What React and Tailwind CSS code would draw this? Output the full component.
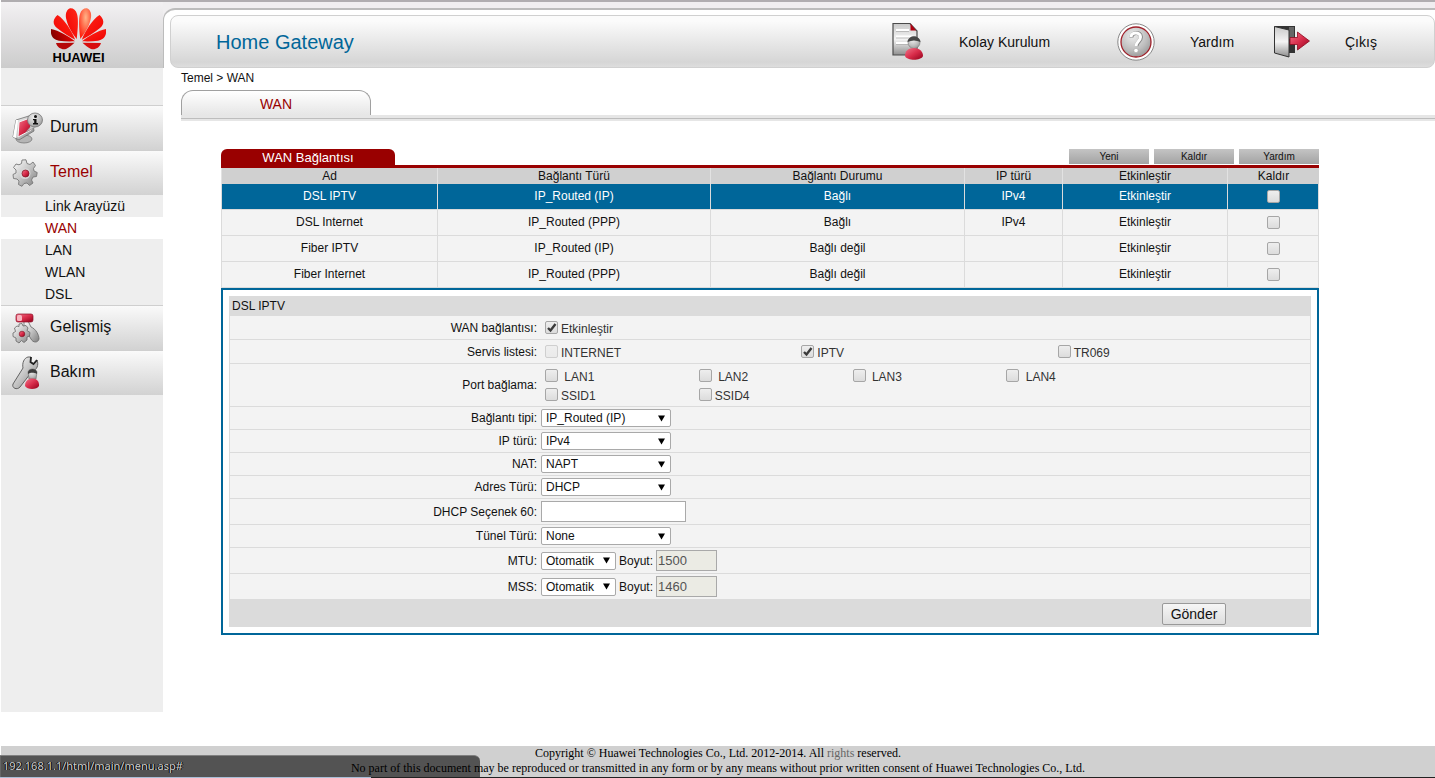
import { useState } from "react";

const connections = [
    { name: "DSL IPTV", type: "IP_Routed (IP)", status: "Bağlı", ip: "IPv4" },
    { name: "DSL Internet", type: "IP_Routed (PPP)", status: "Bağlı", ip: "IPv4" },
    { name: "Fiber IPTV", type: "IP_Routed (IP)", status: "Bağlı değil", ip: "" },
    { name: "Fiber Internet", type: "IP_Routed (PPP)", status: "Bağlı değil", ip: "" },
];

const subMenu = ["Link Arayüzü", "WAN", "LAN", "WLAN", "DSL"];

// Shared gradients, referenced by the icons below
function IconDefs() {
    return (
        <svg width="0" height="0" className="absolute" aria-hidden="true">
            <defs>
                <linearGradient id="metal" x1="0" y1="0" x2="1" y2="1">
                    <stop offset="0" stopColor="#ffffff" />
                    <stop offset="0.5" stopColor="#c4c4c4" />
                    <stop offset="1" stopColor="#7d7d7d" />
                </linearGradient>
                <linearGradient id="paper" x1="0" y1="0" x2="0" y2="1">
                    <stop offset="0" stopColor="#c9c9c9" />
                    <stop offset="0.5" stopColor="#f4f4f4" />
                    <stop offset="1" stopColor="#8e8e8e" />
                </linearGradient>
                <linearGradient id="ruby" x1="0" y1="0" x2="1" y2="1">
                    <stop offset="0" stopColor="#f0758a" />
                    <stop offset="0.5" stopColor="#d92d4b" />
                    <stop offset="1" stopColor="#93001a" />
                </linearGradient>
                <linearGradient id="petal" x1="0" y1="0" x2="1" y2="1">
                    <stop offset="0" stopColor="#ff2a1a" />
                    <stop offset="1" stopColor="#f00000" />
                </linearGradient>
                <linearGradient id="petalDark" x1="1" y1="0.6" x2="0" y2="0.4">
                    <stop offset="0" stopColor="#7c0000" />
                    <stop offset="1" stopColor="#f30000" />
                </linearGradient>
                <radialGradient id="petalLight" cx="0.55" cy="0.3" r="0.7">
                    <stop offset="0" stopColor="#ffb488" />
                    <stop offset="1" stopColor="#ff2612" />
                </radialGradient>
                <radialGradient id="dome" cx="0.4" cy="0.3" r="0.8">
                    <stop offset="0" stopColor="#ededed" />
                    <stop offset="0.6" stopColor="#bdbdbd" />
                    <stop offset="1" stopColor="#8f8f8f" />
                </radialGradient>
            </defs>
        </svg>
    );
}

function Logo() {
    const top = "M29.300 31 C28 20 27.500 11 29 6 C30 2 33 0 36 0.300 C40 2 41 7 39.500 12 C38 19 33 26 29.300 31 Z";
    const upper = "M30.800 31.800 C34 23 42 11 48.500 7 C53 11 54 16 49 20 C43 25 36 29 30.800 31.800 Z";
    const lower = "M31 33.300 C38 28 47 22.500 55 21 C56 27 53 32 47 32.800 C42 33.500 36 33.600 31 33.300 Z";
    const base = "M31.500 34.800 L50 35 C48.500 40 44 42 40 41 C37 40 34 37 31.500 34.800 Z";
    return (
        <svg width="55" height="42" viewBox="0 0 55 42" aria-hidden="true">
            <g>
                <path d={top} fill="url(#petalLight)" />
                <path d={upper} fill="url(#petal)" />
                <path d={lower} fill="url(#petal)" />
                <path d={base} fill="#d80d0d" />
            </g>
            <g transform="translate(55 0) scale(-1 1)">
                <path d={top} fill="url(#petal)" />
                <path d={upper} fill="url(#petal)" />
                <path d={lower} fill="url(#petalDark)" />
                <path d={base} fill="#b50808" />
            </g>
        </svg>
    );
}

function StatusIcon() {
    return (
        <svg width="32" height="32" viewBox="0 0 32 32" aria-hidden="true">
            <ellipse cx="12" cy="27" rx="8" ry="4" fill="#b5b5b5" stroke="#777" strokeWidth="0.800" />
            <path d="M4 8 L20 3 L22 19 L7 28 L1 25 Z" fill="url(#metal)" stroke="#6f6f6f" strokeWidth="0.800" />
            <path d="M1 25 L4 8 L6 8 L4 26 Z" fill="#fff" />
            <path d="M7 10 L18 6 L19 18 L6 25 Z" fill="url(#ruby)" stroke="#f5f5f5" />
            <path d="M20 13 L14 20 L25 14 Z" fill="#ccc" stroke="#888" strokeWidth="0.500" />
            <ellipse cx="23" cy="8" rx="7.500" ry="7" fill="url(#dome)" stroke="#777" strokeWidth="0.800" />
            <circle cx="23.500" cy="4.500" r="1.500" fill="#111" />
            <path d="M21 7 H24.500 V11 H26 V12.500 H21 V11 H22.200 V8.300 H21 Z" fill="#111" />
        </svg>
    );
}

function GearIcon() {
    return (
        <svg width="26" height="28" viewBox="0 0 26 28" aria-hidden="true">
            <path
                d="M10 1 L14 0.800 L15 4.500 L18 5.500 L21 3 L23.500 6.500 L21.500 9.500 L22 12 L25.200 13.500 L24.500 17.500 L21 18 L19.500 21 L21 24 L17.500 26.500 L15 24 L12 24.500 L10 27.300 L6.500 25.500 L7 22 L5 20 L1.500 19.500 L1 15.500 L4 14 L4 11 L1.500 8.500 L4 5 L7 5.800 L9.500 4.500 Z"
                fill="url(#metal)" stroke="#777" strokeWidth="0.900" strokeLinejoin="round"
            />
            <circle cx="13" cy="14.500" r="5.500" fill="#d6d6d6" />
            <circle cx="13.500" cy="14.500" r="3.500" fill="url(#ruby)" stroke="#7c1020" strokeWidth="0.700" />
        </svg>
    );
}

function AdvancedIcon() {
    return (
        <svg width="28" height="31" viewBox="0 0 28 31" aria-hidden="true">
            <path d="M12 8 H16 L19 14 C24 16 27 22 27 26 C26 30 21 30 19 26 L12 14 Z" fill="url(#metal)" stroke="#666" strokeWidth="0.800" />
            <rect x="4" y="1" width="17" height="8" rx="2" fill="url(#ruby)" stroke="#8d1026" strokeWidth="0.700" />
            <rect x="5" y="2" width="5" height="6" rx="1.500" fill="#f9b5c0" />
            <path
                d="M7 11 L10 10.500 L11 13 L14 12.500 L16 15 L15 17.500 L18 19.500 L17.500 23 L15 24 L15 27 L12 29.500 L9.500 27.500 L7 30 L4 28 L4 25 L1 23.500 L1 20 L3.500 18.500 L2.500 15 L5 13 L7 13.500 Z"
                fill="url(#metal)" stroke="#666" strokeWidth="0.800" strokeLinejoin="round"
            />
            <circle cx="10" cy="21" r="2.800" fill="url(#ruby)" stroke="#7c1020" strokeWidth="0.600" />
        </svg>
    );
}

function ToolsIcon() {
    return (
        <svg width="28" height="34" viewBox="0 0 28 34" aria-hidden="true">
            <path
                d="M16 1 L19 1 L18.500 6 L21.500 8 L25 4 C27 9 25 14 20 15.500 L8 31 C5 34.500 -0.500 32 1 28 L11 12 C10 7 12 2 16 1 Z"
                fill="url(#metal)" stroke="#555" strokeWidth="0.900"
            />
            <path d="M19 1 L18.500 6 L21.500 8 L25 4" fill="none" stroke="#222" strokeWidth="1.800" />
            <path d="M16 16 C17 12 24 12 25 16 L24 23 H17 Z" fill="url(#dome)" stroke="#777" strokeWidth="0.700" />
            <path d="M16 16 C17 12 24 12 25 16 L25 18 C21 16 18 17 16 18 Z" fill="#3d3d3d" />
            <path d="M13 30 C13 25 16 22.500 20.500 22.500 C25 22.500 27.500 26 27 30 C25 34 15 34 13 30 Z" fill="url(#ruby)" />
        </svg>
    );
}

function WizardIcon() {
    return (
        <svg width="32" height="38" viewBox="0 0 32 38" aria-hidden="true">
            <path d="M1 0.500 H18 L25 8 V32 H1 Z" fill="url(#paper)" stroke="#4b4b4b" strokeWidth="1.200" />
            <path d="M18.500 0.500 L24 7.500 H18.500 Z" fill="#b00010" />
            <path d="M4 7 H17 M4 13.500 H21 M4 20 H16" stroke="#fff" strokeWidth="1.800" />
            <path d="M4 8.500 H17 M4 15 H21 M4 21.500 H16" stroke="#aaa" strokeWidth="0.700" />
            <circle cx="22" cy="19.500" r="6" fill="url(#dome)" stroke="#777" strokeWidth="0.600" />
            <path d="M15.500 19 C16 11.500 28 11.500 28.500 19 C24 17 20 17 15.500 19 Z" fill="#474747" />
            <path d="M13 33 C13 28 16 25 22 25 C28 25 31 29 31 33 C29 38 15 38 13 33 Z" fill="url(#ruby)" />
        </svg>
    );
}

function HelpIcon() {
    return (
        <svg width="38" height="38" viewBox="0 0 38 38" aria-hidden="true">
            <circle cx="19" cy="19" r="18.200" fill="#fff" stroke="#888" />
            <circle cx="19" cy="19" r="15" fill="url(#dome)" stroke="#a0202a" strokeWidth="1.300" />
            <path d="M14.500 14.500 C14.500 8.500 24 8.500 24 14 C24 18 20 18.500 19.500 23" fill="none" stroke="#888" strokeWidth="4" />
            <path d="M14 14 C14 8.500 23.500 8.500 23.500 14 C23.500 18 19 18.500 19 23" fill="none" stroke="#fff" strokeWidth="3" />
            <circle cx="19" cy="27.500" r="2.200" fill="#fff" stroke="#999" strokeWidth="0.500" />
        </svg>
    );
}

function ExitIcon() {
    return (
        <svg width="36" height="34" viewBox="0 0 36 34" aria-hidden="true">
            <path d="M0.500 1 H21 V28 H0.500 Z" fill="#333" />
            <path d="M15 2 H20 V14 H15 Z" fill="#666" />
            <path d="M0.500 1.500 L15 5 V32 L0.500 28 Z" fill="url(#paper)" stroke="#333" />
            <path d="M16 12.500 H23.500 V7 L35.500 16 L23.500 25 V19.500 H16 Z" fill="url(#ruby)" stroke="#8c0a1e" strokeWidth="0.800" />
        </svg>
    );
}

function Checkbox({ id, defaultChecked, disabled, label }) {
    return (
        <span className="inline-grid size-[13px] shrink-0">
            <input
                id={id}
                type="checkbox"
                defaultChecked={defaultChecked}
                disabled={disabled}
                aria-label={label}
                className="peer [grid-area:1/1] size-[13px] appearance-none rounded-xs border border-[#a6a6a6] bg-linear-to-b from-[#eeeeee] to-[#dcdcdc] disabled:border-[#cfcfcf] disabled:from-[#efefef] disabled:to-[#eaeaea]"
            />
            <svg viewBox="0 0 13 13" className="pointer-events-none invisible [grid-area:1/1] size-[13px] peer-checked:visible" aria-hidden="true">
                <path d="M3 7 L5.500 9.500 L10.500 3" fill="none" stroke="#3b3b3b" strokeWidth="2.400" />
            </svg>
        </span>
    );
}

function CheckField({ id, text, defaultChecked, disabled }) {
    return (
        <div className="flex items-start gap-[3px] pl-1 leading-[17px]">
            <Checkbox id={id} defaultChecked={defaultChecked} disabled={disabled} />
            <label htmlFor={id} className="whitespace-pre text-[#333333]">{text}</label>
        </div>
    );
}

function SelectBox({ id, value, narrow }) {
    return (
        <span className={narrow ? "inline-grid w-[75px]" : "inline-grid w-[130px]"}>
            <select id={id} defaultValue={value} className="[grid-area:1/1] h-[18px] w-full appearance-none rounded-xs border border-[#a9a9a9] bg-white pl-1 text-xs leading-4">
                <option>{value}</option>
            </select>
            <svg width="7" height="7" viewBox="0 0 7 7" className="pointer-events-none mr-[6px] self-center justify-self-end [grid-area:1/1]" aria-hidden="true">
                <path d="M0 0.500 H7 L3.500 6.500 Z" fill="#000" />
            </svg>
        </span>
    );
}

function FormRow({ label, htmlFor, children }) {
    return (
        <div className="flex border-x border-b border-[#dbdbdb] bg-[#f3f3f3]">
            <div className="flex w-[307px] shrink-0 items-center justify-end">
                <label htmlFor={htmlFor}>{label}</label>
            </div>
            <div className="ml-1 flex-1">{children}</div>
        </div>
    );
}

function SelectRow({ id, label, value }) {
    return (
        <FormRow label={label} htmlFor={id}>
            <div className="flex h-[22px] items-center">
                <SelectBox id={id} value={value} />
            </div>
        </FormRow>
    );
}

function SizeRow({ id, label, size }) {
    return (
        <FormRow label={label} htmlFor={id}>
            <div className="flex h-[25px] items-center gap-[3px]">
                <SelectBox id={id} value="Otomatik" narrow />
                <label htmlFor={`${id}-size`} className="w-[34px]">Boyut:</label>
                <input
                    id={`${id}-size`}
                    type="text"
                    disabled
                    defaultValue={size}
                    className="h-[21px] w-[61px] border border-[#a9a9a9] bg-[#ebebe4] px-px text-[13px] text-[#545454]"
                />
            </div>
        </FormRow>
    );
}

function MenuItem({ icon, text, active }) {
    return (
        <a href="#" className="flex h-[45px] items-center border-t border-[#cfcfcf] bg-linear-to-b from-[#fafafa] to-[#d2d2d2] text-base">
            <span className="w-[49px] shrink-0 pl-[11px]">{icon}</span>
            <span className={active ? "pb-[3px] text-[#990000]" : "pb-[3px]"}>{text}</span>
        </a>
    );
}

function Sidebar() {
    return (
        <aside className="w-[162px] shrink-0 bg-[#eeeeee] pt-[37px]">
            <nav>
                <MenuItem icon={<StatusIcon />} text="Durum" />
                <MenuItem icon={<GearIcon />} text="Temel" active />
                <ul className="text-sm">
                    {subMenu.map((item) => (
                        <li key={item}>
                            <a href="#" className={item === "WAN" ? "block bg-white pl-11 leading-[22px] text-[#990000]" : "block pl-11 leading-[22px]"}>{item}</a>
                        </li>
                    ))}
                </ul>
                <MenuItem icon={<AdvancedIcon />} text="Gelişmiş" />
                <MenuItem icon={<ToolsIcon />} text="Bakım" />
            </nav>
        </aside>
    );
}

function Header() {
    return (
        <header className="flex h-[68px] border-t-2 border-[#b0adb0] bg-linear-to-b from-[#f3f1f3] to-[#cccccc]">
            <div className="flex w-[162px] shrink-0 flex-col items-center pt-[6px] pr-[7px]">
                <Logo />
                <span className="text-[13px] leading-4 font-bold text-black">HUAWEI</span>
            </div>
            <div className="flex-1 bg-[#f0eef0] pt-[6px]">
                <div className="h-full rounded-tl-xl border-t-2 border-l border-[#bcbcbc] bg-white pt-[5px] pl-[6px]">
                    <div className="flex h-[53px] items-center rounded-lg border border-[#d0d0d0] bg-linear-to-b from-[#fbfbfb] from-10% via-[#d6d6d6] via-90% to-[#dddddd] pl-[45px]">
                        <h1 className="flex-1 text-xl text-[#006699]">Home Gateway</h1>
                        <nav className="flex text-sm">
                            <a href="#" className="flex w-[225px] items-center gap-[35px]"><WizardIcon />Kolay Kurulum</a>
                            <a href="#" className="flex w-[157px] items-center gap-[35px]"><HelpIcon />Yardım</a>
                            <a href="#" className="flex w-40 items-center gap-[35px]"><ExitIcon />Çıkış</a>
                        </nav>
                    </div>
                </div>
            </div>
        </header>
    );
}

function ConnectionTable({ selected, onSelect }) {
    return (
        <table className="w-full table-fixed border-separate border-spacing-0 text-center">
            <colgroup>
                <col className="w-[216px]" />
                <col className="w-[273px]" />
                <col className="w-[254px]" />
                <col className="w-[98px]" />
                <col className="w-[165px]" />
                <col className="w-[92px]" />
            </colgroup>
            <thead>
                <tr className="bg-[#d0d0d0]">
                    {["Ad", "Bağlantı Türü", "Bağlantı Durumu", "IP türü", "Etkinleştir", "Kaldır"].map((title) => (
                        <th key={title} className="h-4 border-l border-[#e2e2e2] leading-4 font-normal">{title}</th>
                    ))}
                </tr>
            </thead>
            <tbody>
                {connections.map((row, i) => (
                    <tr key={row.name} onClick={() => onSelect(i)} className={i === selected ? "bg-[#006699] text-white" : "bg-[#f3f3f3]"}>
                        {[row.name, row.type, row.status, row.ip, "Etkinleştir"].map((cell, j) => (
                            <td key={j} className="h-[26px] border-b border-l border-[#dbdbdb] leading-[15px]">{cell}</td>
                        ))}
                        <td className="h-[26px] border-x border-b border-[#dbdbdb] leading-[0px]">
                            <Checkbox label={`Kaldır ${row.name}`} />
                        </td>
                    </tr>
                ))}
            </tbody>
        </table>
    );
}

function SettingsForm({ name }) {
    return (
        <form className="border-2 border-[#006699] p-[6px]" onSubmit={(e) => e.preventDefault()}>
            <h2 className="h-5 bg-[#dbdbdb] pl-[3px] leading-5">{name}</h2>
            <FormRow label="WAN bağlantısı:" htmlFor="wan-enable">
                <div className="h-[23px] pt-[5px]">
                    <CheckField id="wan-enable" text="Etkinleştir" defaultChecked />
                </div>
            </FormRow>
            <FormRow label="Servis listesi:">
                <div className="grid h-[23px] grid-cols-3 pt-[5px]">
                    <CheckField id="srv-internet" text="INTERNET" disabled />
                    <CheckField id="srv-iptv" text="IPTV" defaultChecked />
                    <CheckField id="srv-tr069" text="TR069" />
                </div>
            </FormRow>
            <FormRow label="Port bağlama:">
                <div className="grid h-[42px] auto-rows-[19px] grid-cols-5 pt-[5px]">
                    {["LAN1", "LAN2", "LAN3", "LAN4"].map((port) => (
                        <CheckField key={port} id={port} text={` ${port}`} />
                    ))}
                    <div className="col-start-1">
                        <CheckField id="SSID1" text="SSID1" />
                    </div>
                    <CheckField id="SSID4" text="SSID4" />
                </div>
            </FormRow>
            <SelectRow id="conn-type" label="Bağlantı tipi:" value="IP_Routed (IP)" />
            <SelectRow id="ip-type" label="IP türü:" value="IPv4" />
            <SelectRow id="nat" label="NAT:" value="NAPT" />
            <SelectRow id="addr-type" label="Adres Türü:" value="DHCP" />
            <FormRow label="DHCP Seçenek 60:" htmlFor="dhcp60">
                <div className="flex h-[25px] items-center">
                    <input id="dhcp60" type="text" className="h-[21px] w-[145px] border border-[#a9a9a9] bg-white px-px text-[13px]" />
                </div>
            </FormRow>
            <SelectRow id="tunnel" label="Tünel Türü:" value="None" />
            <SizeRow id="mtu" label="MTU:" size="1500" />
            <SizeRow id="mss" label="MSS:" size="1460" />
            <div className="flex h-[27px] items-center justify-end bg-[#dbdbdb] pr-[85px]">
                <button type="submit" className="h-[22px] w-16 rounded-xs border border-[#999999] bg-linear-to-b from-[#f6f6f6] to-[#dedede] text-sm leading-4">Gönder</button>
            </div>
        </form>
    );
}

export default function App() {
    const [selected, setSelected] = useState(0);

    return (
        <div className="relative flex min-h-screen flex-col bg-white pl-px font-['Liberation_Sans',Arial,sans-serif] text-xs text-[#111111]">
            <IconDefs />
            <Header />
            <div className="flex flex-1">
                <Sidebar />
                <main className="min-w-0 flex-1 pl-[18px]">
                    <p className="h-[22px] leading-5">Temel &gt; WAN</p>

                    {/* Page tab */}
                    <div className="flex h-[25px]">
                        <a href="#" className="w-[190px] rounded-t-xl border-x border-t border-[#a0a0a0] bg-linear-to-b from-white to-[#e6e6e6] text-center text-sm leading-[26px] text-[#990000]">WAN</a>
                    </div>
                    <div className="h-[3px] bg-[#e6e6e6]" />
                    <div className="h-[3px] border-t border-[#bdbdbd] bg-[#e6e6e6]" />

                    <section className="mt-7 mr-[116px] ml-10">
                        {/* Title and actions */}
                        <div className="flex h-[19px] items-start justify-between border-b-[3px] border-[#990000]">
                            <h2 className="h-4 w-[174px] rounded-t-md bg-[#990000] text-center text-[13px] leading-[17px] text-white">WAN Bağlantısı</h2>
                            <div className="flex gap-[5px]">
                                {["Yeni", "Kaldır", "Yardım"].map((action) => (
                                    <button key={action} type="button" className="h-[15px] w-20 bg-linear-to-b from-[#c4c4c4] to-[#a3a3a3] text-[10px] leading-[15px]">{action}</button>
                                ))}
                            </div>
                        </div>
                        <ConnectionTable selected={selected} onSelect={setSelected} />
                        <SettingsForm name={connections[selected].name} />
                    </section>
                </main>
            </div>

            <footer className="mt-[34px] h-8 bg-[#d0d0d0] text-center font-['Liberation_Serif',serif] leading-[15px] text-black">
                <p>Copyright © Huawei Technologies Co., Ltd. 2012-2014. All <span className="text-[#666666]">rights</span> reserved.</p>
                <p>No part of this document may be reproduced or transmitted in any form or by any means without prior written consent of Huawei Technologies Co., Ltd.</p>
            </footer>

            {/* Link target bubble and window edge */}
            <div className="absolute bottom-px left-0 h-[22px] w-[480px] rounded-tr-md border-t border-[#808080] bg-black/60 pl-[3px] font-['Noto_Sans',sans-serif] text-[11px] leading-[19px] text-[#cccccc] text-shadow-[1px_0_0_#000,-1px_0_0_#000]">
                192.168.1.1/html/main/menu.asp#
            </div>
            <div className="absolute inset-x-0 bottom-0 flex h-px">
                <div className="w-[371px] bg-[#a9bdd6]" />
                <div className="flex-1 bg-[#222222]" />
            </div>
        </div>
    );
}
